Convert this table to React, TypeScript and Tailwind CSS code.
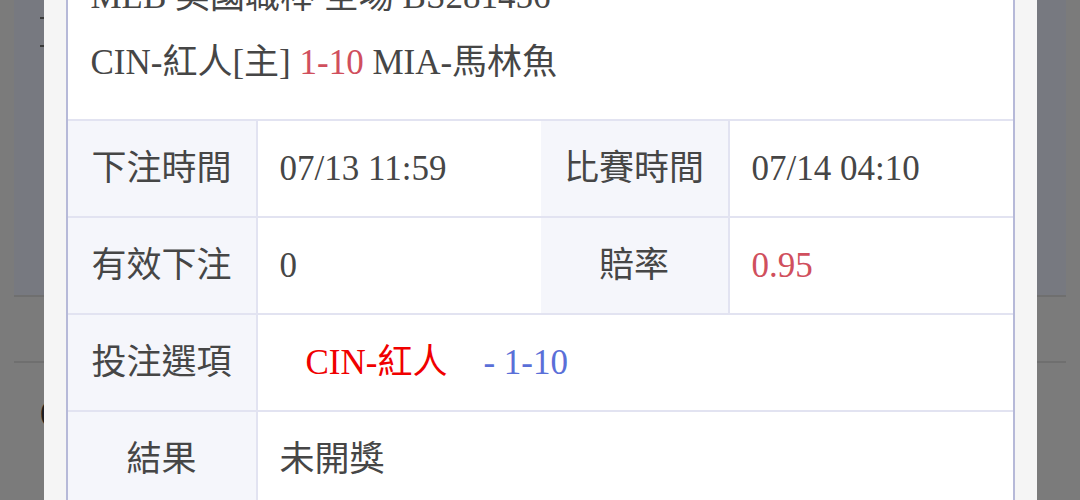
import type { ReactNode } from 'react';

const LINE = 'border-[#e2e3f1]';

function Label({ children }: { children: ReactNode }) {
  return (
    <div className={`flex items-center justify-center border-r-2 ${LINE} bg-[#f5f6fb]`}>
      {children}
    </div>
  );
}

function Value({ children, className = '' }: { children: ReactNode; className?: string }) {
  return <div className={`flex items-center pl-[22px] ${className}`}>{children}</div>;
}

export default function App() {
  return (
    <div className="relative h-[500px] w-[1080px] overflow-hidden bg-[#7b7b7b] font-['Liberation_Serif','Noto_Sans_CJK_TC',serif]">
      {/* dimmed page behind the modal */}
      <div className="mx-[14px] flex flex-col">
        <div className="h-[295px] bg-[#777980] pl-[26px] pt-[17px]">
          <div className="h-[2px] w-[4px] bg-[#3a3a3a]" />
          <div className="mt-[26px] h-[2px] w-[4px] bg-[#3a3a3a]" />
        </div>
        <div className="h-[68px] border-y-2 border-[#6f6f6f]" />
        <div className="pl-[26px] pt-[28px] text-[30px] leading-[40px] text-[#1e1e1e]">(</div>
      </div>

      {/* modal */}
      <div className="absolute inset-0 flex justify-center">
        <div className="-mt-[29px] h-[600px] w-[993px] bg-[#f5f5f5] px-[22px]">
          <div className="h-full border-x-2 border-[#b6b9d8] bg-white text-[35px] leading-[52px] text-[#464646]">
            <div className="px-[23px] pb-[30px]">
              <div>MLB 美國職棒 全場 BS281456</div>
              <div className="mt-[14px]">
                CIN-紅人[主] <span className="text-[#d04f5d]">1-10</span> MIA-馬林魚
              </div>
            </div>

            <div className={`grid h-[97px] grid-cols-[190px_283px_189px_1fr] border-t-2 ${LINE}`}>
              <Label>下注時間</Label>
              <Value>07/13 11:59</Value>
              <Label>比賽時間</Label>
              <Value>07/14 04:10</Value>
            </div>
            <div className={`grid h-[97px] grid-cols-[190px_283px_189px_1fr] border-t-2 ${LINE}`}>
              <Label>有效下注</Label>
              <Value>0</Value>
              <Label>賠率</Label>
              <Value className="text-[#d04f5d]">0.95</Value>
            </div>
            <div className={`grid h-[97px] grid-cols-[190px_1fr] border-t-2 ${LINE}`}>
              <Label>投注選項</Label>
              <Value>
                <span className="ml-[26px] text-[#f00000]">CIN-紅人</span>
                <span className="ml-[36px] text-[#5a6fd8]">- 1-10</span>
              </Value>
            </div>
            <div className={`grid h-[97px] grid-cols-[190px_1fr] border-t-2 ${LINE}`}>
              <Label>結果</Label>
              <Value>未開獎</Value>
            </div>
          </div>
        </div>
      </div>
    </div>
  );
}
